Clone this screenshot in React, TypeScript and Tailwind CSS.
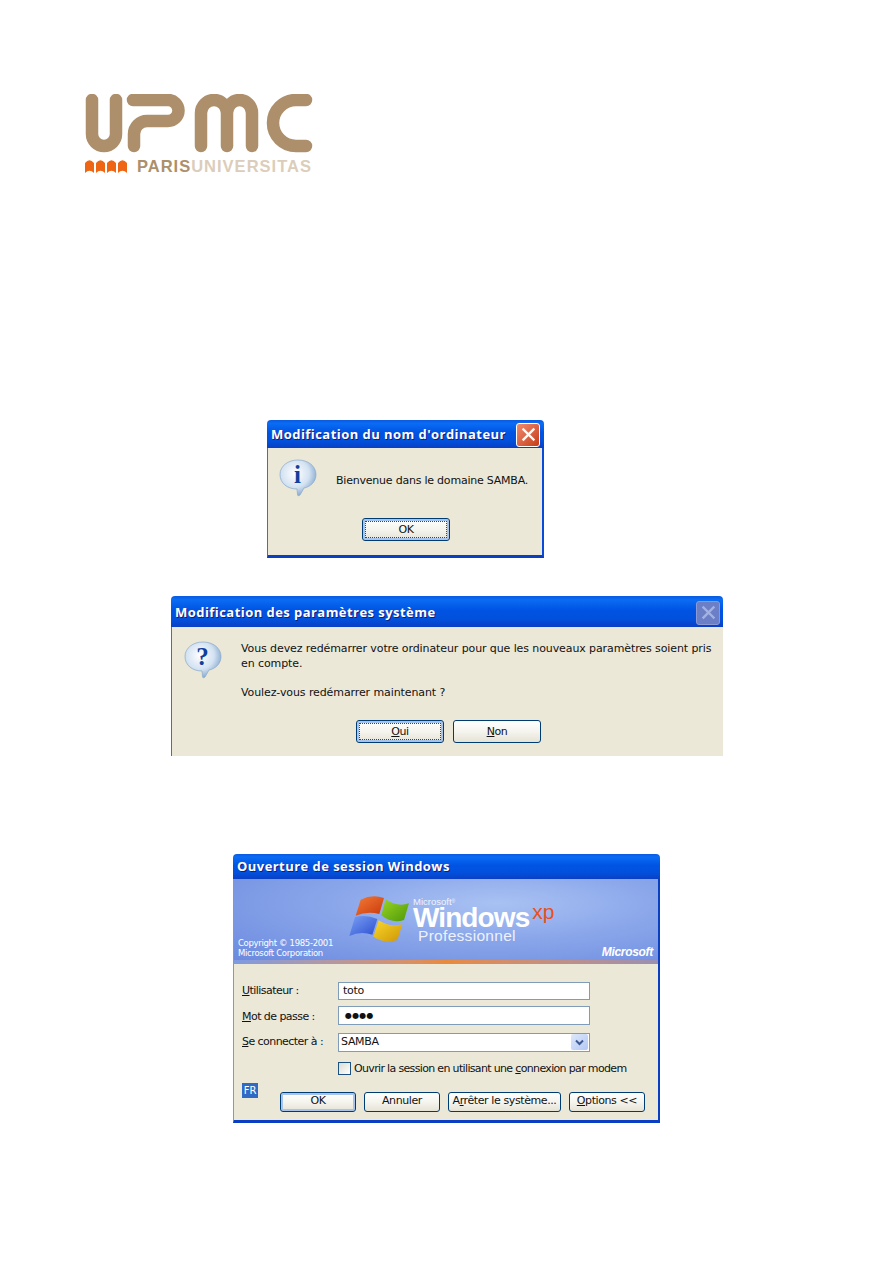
import type { ReactNode } from "react";

const uiFont = "font-['DejaVu_Sans',sans-serif]";

function XpButton({ children, width, primary, focused, height = "h-[23px] pt-[2px]" }: { children: ReactNode; width: string; primary?: boolean; focused?: boolean; height?: string }) {
  return (
    <div className={`${width} ${height} shrink-0 rounded-[3px] border border-[#003c74] bg-gradient-to-b from-white via-[#f5f4ee] to-[#e6e3d6] ${primary ? "shadow-[inset_0_0_0_2px_#a9c4ea]" : ""} ${focused ? "outline-1 outline-dotted -outline-offset-4 outline-[#444444]" : ""} flex items-center justify-center text-[11px] tracking-[-0.4px] text-[#111111] ${uiFont}`}>
      {children}
    </div>
  );
}

function CloseButton({ disabled }: { disabled?: boolean }) {
  return (
    <div className={`flex h-[24px] w-[24px] shrink-0 items-center justify-center rounded-[3px] border ${disabled ? "-mr-[1px] border-[#8b9ad6] bg-[#6b7fc6]" : "border-white bg-gradient-to-br from-[#ef8a6c] to-[#c63a12]"}`}>
      <svg width="15" height="15" viewBox="0 0 15 15">
        <path d="M2.5 2.5 L12.5 12.5 M12.5 2.5 L2.5 12.5" stroke={disabled ? "#a6b2de" : "#ffffff"} strokeWidth="2.4" strokeLinecap="square" />
      </svg>
    </div>
  );
}

function Bubble({ glyph, id }: { glyph: string; id: string }) {
  return (
    <svg width="38" height="38" viewBox="0 0 38 38" className="shrink-0">
      <defs>
        <radialGradient id={id} cx="0.42" cy="0.38" r="0.65">
          <stop offset="0" stopColor="#ffffff" />
          <stop offset="0.6" stopColor="#d3e2f2" />
          <stop offset="1" stopColor="#7fa4cb" />
        </radialGradient>
      </defs>
      <path d="M19 1 C29 1 37 7 37 15.5 C37 23 31 28 25 29 L21 36 C20 37 18.5 37 18.5 35.5 L18 30 C8 30 1 24 1 15.5 C1 7 9 1 19 1 Z" fill={`url(#${id})`} stroke="#8aa9c9" strokeWidth="0.7" />
      <text x="18.5" y="24" textAnchor="middle" fontFamily="'Liberation Serif', serif" fontWeight="700" fontSize="25" fill="#123f9c">
        {glyph}
      </text>
    </svg>
  );
}

function Arches() {
  return (
    <svg width="42" height="14" viewBox="0 0 42 14" className="shrink-0">
      {[0, 11, 22, 33].map((x) => (
        <path key={x} d={`M${x} 14 V4 Q${x + 4.5} -1.5 ${x + 9} 4 V14 Q${x + 4.5} 9.5 ${x} 14 Z`} fill="#ee6614" />
      ))}
    </svg>
  );
}

function Logo() {
  return (
    <div className="flex h-[80px] w-[228px] flex-col">
      <svg width="228" height="59" viewBox="85 94 228 59" className="block">
        <g fill="none" stroke="#ad8f6b" strokeWidth="12.5" strokeLinecap="round" strokeLinejoin="round">
          <path d="M92 100 V134 A12 12 0 0 0 116 134 V100" />
          <path d="M133 100 H168 A10.5 10.5 0 0 1 168 121 H147 A13 13 0 0 0 134 134 V146" />
          <path d="M201 146 V113 A13 13 0 0 1 214 100 A13 13 0 0 1 227 113 V146 M227 113 A12.5 13 0 0 1 252 113 V146" />
          <path d="M306 100 H296 A23 23 0 0 0 296 146 H306" />
        </g>
      </svg>
      <div className="mt-[6px] flex items-center font-['Liberation_Sans',sans-serif] text-[16.5px] font-bold leading-[14px] tracking-[1px]">
        <Arches />
        <span className="ml-[10px] text-[#ad8f6b]">PARIS</span>
        <span className="text-[#dccdbb]">UNIVERSITAS</span>
      </div>
    </div>
  );
}

function TitleBar({ title, height, children }: { title: string; height: string; children?: ReactNode }) {
  return (
    <div className={`${height} flex items-center justify-between rounded-t-[4px] bg-[linear-gradient(180deg,#0a5ae0_0%,#0a6cf4_12%,#0054e3_45%,#0250dc_75%,#0a3fc4_100%)] pl-[4px] pr-[4px] font-['Open_Sans',sans-serif] text-[13px] font-bold tracking-[0.45px] text-white [text-shadow:1px_1px_0_#0f1f80]`}>
      <span className="whitespace-nowrap">{title}</span>
      {children}
    </div>
  );
}

function WelcomeDialog() {
  return (
    <div className="ml-[267px] mt-[246px] w-[277px]">
      <TitleBar title="Modification du nom d'ordinateur" height="h-[28px] pt-[1px]">
        <CloseButton />
      </TitleBar>
      <div className={`h-[110px] border-b-[3px] border-l border-r-2 border-b-[#0a3fc4] border-l-[#3a6fd8] border-r-[#0a4ad8] bg-[#ebe8d8] pl-[11px] ${uiFont}`}>
        <div className="flex pt-[11px]">
          <Bubble glyph="i" id="bubble-info" />
          <p className="ml-[19px] mt-[15px] whitespace-nowrap text-[11px] leading-[13px] tracking-[-0.22px] text-[#111111]">Bienvenue dans le domaine SAMBA.</p>
        </div>
        <div className="mt-[21px] flex pl-[83px]">
          <XpButton width="w-[88px]" primary focused>OK</XpButton>
        </div>
      </div>
    </div>
  );
}

function RestartDialog() {
  return (
    <div className="ml-[171px] mt-[38px] w-[552px]">
      <TitleBar title="Modification des paramètres système" height="h-[31px] pt-[2px]">
        <CloseButton disabled />
      </TitleBar>
      <div className={`h-[129px] border-l border-l-[#3a6fd8] bg-[#ebe8d8] pl-[12px] ${uiFont}`}>
        <div className="flex pt-[14px]">
          <Bubble glyph="?" id="bubble-question" />
          <div className="ml-[19px] text-[11px] leading-[15px] tracking-[-0.1px] text-[#111111]">
            <p className="w-[476px]">Vous devez redémarrer votre ordinateur pour que les nouveaux paramètres soient pris en compte.</p>
            <p className="mt-[14px]">Voulez-vous redémarrer maintenant ?</p>
          </div>
        </div>
        <div className="mt-[20px] flex gap-[9px] pl-[172px]">
          <XpButton width="w-[88px]" primary focused><span><u>O</u>ui</span></XpButton>
          <XpButton width="w-[88px]"><span><u>N</u>on</span></XpButton>
        </div>
      </div>
    </div>
  );
}

function WindowsFlag() {
  return (
    <svg width="62" height="47" viewBox="358 133 186 141" className="shrink-0">
      <defs>
        <linearGradient id="flag-red" x1="0" y1="0" x2="1" y2="1">
          <stop offset="0" stopColor="#f47a34" />
          <stop offset="1" stopColor="#c8390e" />
        </linearGradient>
        <linearGradient id="flag-green" x1="0" y1="0" x2="1" y2="1">
          <stop offset="0" stopColor="#9ad420" />
          <stop offset="1" stopColor="#4e9a0a" />
        </linearGradient>
        <linearGradient id="flag-blue" x1="0" y1="0" x2="1" y2="1">
          <stop offset="0" stopColor="#7aa0f4" />
          <stop offset="1" stopColor="#2c4fd0" />
        </linearGradient>
        <linearGradient id="flag-yellow" x1="0" y1="0" x2="1" y2="1">
          <stop offset="0" stopColor="#f8d82a" />
          <stop offset="1" stopColor="#cf9606" />
        </linearGradient>
      </defs>
      <path d="M396 147 Q430 130 466 142 L452 190 Q416 180 381 195 Z" fill="url(#flag-red)" />
      <path d="M471 146 Q505 170 541 158 L526 208 Q490 220 458 194 Z" fill="url(#flag-green)" />
      <path d="M379 199 Q412 190 446 205 L431 252 Q396 240 362 256 Z" fill="url(#flag-blue)" />
      <path d="M450 209 Q485 232 521 220 L506 268 Q468 280 434 258 Z" fill="url(#flag-yellow)" />
    </svg>
  );
}

function Banner() {
  return (
    <div className="flex h-[81px] items-end bg-[radial-gradient(ellipse_at_62%_30%,#a9c2f3_0%,#8aa6ea_45%,#6b8adf_100%)] pb-[2px] pl-[4px] pr-[5px]">
      <div className={`w-[110px] text-[8.5px] leading-[10px] tracking-[-0.32px] text-white ${uiFont}`}>
        <p>Copyright © 1985-2001</p>
        <p>Microsoft Corporation</p>
      </div>
      <div className="mb-auto mt-[16px] flex items-start">
        <WindowsFlag />
        <div className="ml-[3px] mt-[2px] font-['Liberation_Sans',sans-serif] text-white">
          <p className="text-[9.5px] leading-[10px] opacity-85">Microsoft<sup className="text-[5px]">®</sup></p>
          <div className="flex items-start">
            <p className="text-[28px] font-bold leading-[21px] tracking-[-0.9px]">Windows</p>
            <p className="ml-[3px] -mt-[6px] text-[21px] leading-[21px] text-[#e8501e]">xp</p>
          </div>
          <p className="ml-[5px] mt-[1px] text-[15.5px] leading-[14px] tracking-[0.3px] opacity-85">Professionnel</p>
        </div>
      </div>
      <p className="ml-auto font-['Liberation_Sans',sans-serif] text-[12px] font-bold italic leading-[12px] tracking-[-0.3px] text-white">Microsoft</p>
    </div>
  );
}

function FormRow({ label, children }: { label: ReactNode; children: ReactNode }) {
  return (
    <div className="flex items-center">
      <span className="w-[96px] whitespace-nowrap text-[11px] tracking-[-0.55px] text-[#111111]">{label}</span>
      {children}
    </div>
  );
}

function LogonDialog() {
  const inputClass = "flex w-[252px] items-center border border-[#7f9db9] bg-white text-[#111111]";
  return (
    <div className="ml-[233px] mt-[98px] w-[427px]">
      <TitleBar title="Ouverture de session Windows" height="h-[25px] pt-[1px]" />
      <div className="border-l border-r-2 border-l-[#6f9be8] border-r-[#0a3fc4]">
        <Banner />
        <div className="h-[4px] bg-gradient-to-r from-[#7e9ae2] via-[#e98a3c] to-[#9a8fb4]" />
      </div>
      <div className={`h-[159px] border-b-[3px] border-l border-r-2 border-b-[#0a3fc4] border-l-[#6f9be8] border-r-[#0a3fc4] bg-[#ebe8d8] pl-[8px] pt-[18px] ${uiFont}`}>
        <div className="flex flex-col">
          <FormRow label={<><u>U</u>tilisateur :</>}>
            <div className={`${inputClass} h-[18px] pl-[4px] text-[11px] tracking-[-0.3px]`}>toto</div>
          </FormRow>
          <div className="mt-[6px]">
            <FormRow label={<span className="inline-block pt-[3px]"><u>M</u>ot de passe :</span>}>
              <div className={`${inputClass} h-[19px] pl-[6px] text-[8px] tracking-[0.2px]`}>●●●●</div>
            </FormRow>
          </div>
          <div className="mt-[7px]">
            <FormRow label={<><u>S</u>e connecter à :</>}>
              <div className={`${inputClass} h-[19px] justify-between pl-[2px] pr-[1px] text-[11px] tracking-[-0.3px]`}>
                <span>SAMBA</span>
                <span className="flex h-[16px] w-[17px] items-center justify-center rounded-[2px] bg-gradient-to-br from-[#dfe8fb] to-[#b3c8f3]">
                  <svg width="9" height="7" viewBox="0 0 9 7">
                    <path d="M1 1.5 L4.5 5 L8 1.5" fill="none" stroke="#3d5a94" strokeWidth="2" />
                  </svg>
                </span>
              </div>
            </FormRow>
          </div>
          <div className="mt-[10px] flex items-center pl-[96px]">
            <span className="h-[13px] w-[13px] border border-[#1c5180] bg-gradient-to-br from-[#dcdcd4] to-white" />
            <span className="ml-[3px] whitespace-nowrap text-[11px] leading-[13px] tracking-[-0.66px] text-[#111111]">
              Ouvrir la session en utilisant une <u>c</u>onnexion par modem
            </span>
          </div>
        </div>
        <div className="mt-[8px] flex">
          <span className="h-[15px] w-[16px] bg-[#316ac5] text-center text-[10px] leading-[15px] text-white">FR</span>
          <div className="ml-[22px] mt-[9px] flex gap-[8px]">
            <XpButton width="w-[76px]" height="h-[20px]" primary>OK</XpButton>
            <XpButton width="w-[76px]" height="h-[20px]">Annuler</XpButton>
            <XpButton width="w-[113px]" height="h-[20px]"><span>A<u>r</u>rêter le système...</span></XpButton>
            <XpButton width="w-[76px]" height="h-[20px]"><span><u>O</u>ptions &lt;&lt;</span></XpButton>
          </div>
        </div>
      </div>
    </div>
  );
}

export default function App() {
  return (
    <div className="min-h-[1263px] w-[893px] overflow-hidden bg-white pt-[94px]">
      <div className="ml-[85px]">
        <Logo />
      </div>
      <WelcomeDialog />
      <RestartDialog />
      <LogonDialog />
    </div>
  );
}
